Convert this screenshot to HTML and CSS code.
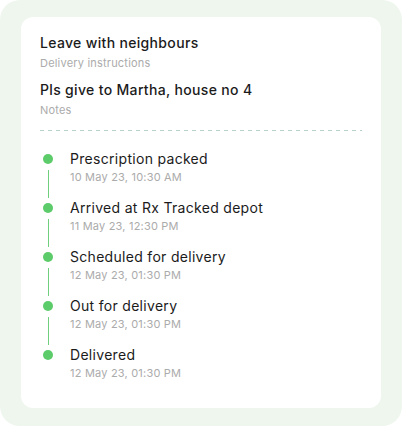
FILE: index.html
```html
<!DOCTYPE html>
<html lang="en">
<head>
<meta charset="utf-8">
<title>Delivery tracking</title>
<link rel="stylesheet" href="styles.css">
</head>
<body>
<div class="panel">
  <div class="card">
    <div class="field">
      <div class="field-title">Leave with neighbours</div>
      <div class="field-label">Delivery instructions</div>
    </div>
    <div class="field field-second">
      <div class="field-title">Pls give to Martha, house no 4</div>
      <div class="field-label">Notes</div>
    </div>
    <div class="divider"></div>
    <ul class="timeline">
      <li class="step">
        <div class="rail"><span class="dot"></span><span class="line"></span></div>
        <div class="step-text">
          <div class="step-title">Prescription packed</div>
          <div class="step-date">10 May 23, 10:30 AM</div>
        </div>
      </li>
      <li class="step">
        <div class="rail"><span class="dot"></span><span class="line"></span></div>
        <div class="step-text">
          <div class="step-title">Arrived at Rx Tracked depot</div>
          <div class="step-date">11 May 23, 12:30 PM</div>
        </div>
      </li>
      <li class="step">
        <div class="rail"><span class="dot"></span><span class="line"></span></div>
        <div class="step-text">
          <div class="step-title">Scheduled for delivery</div>
          <div class="step-date">12 May 23, 01:30 PM</div>
        </div>
      </li>
      <li class="step">
        <div class="rail"><span class="dot"></span><span class="line"></span></div>
        <div class="step-text">
          <div class="step-title">Out for delivery</div>
          <div class="step-date">12 May 23, 01:30 PM</div>
        </div>
      </li>
      <li class="step step-last">
        <div class="rail"><span class="dot"></span></div>
        <div class="step-text">
          <div class="step-title">Delivered</div>
          <div class="step-date">12 May 23, 01:30 PM</div>
        </div>
      </li>
    </ul>
  </div>
</div>
</body>
</html>
```
FILE: styles.css
```css
* { box-sizing: border-box; }
html, body {
  margin: 0;
  padding: 0;
  background: #ffffff;
}
body {
  font-family: "Inter", "Noto Sans", "Liberation Sans", sans-serif;
  color: #1b1b1b;
}
.panel {
  width: 402px;
  height: 426px;
  background: #eef6ee;
  border-radius: 20px;
  padding: 17px 21px 18px 21px;
}
.card {
  background: #ffffff;
  border-radius: 12px;
  height: 100%;
  padding: 16px 19px 12px 19px;
}
.field-title {
  font-size: 14px;
  line-height: 20px;
  font-weight: 500;
  letter-spacing: 0.33px;
  color: #1b1b1b;
}
.field-label {
  font-size: 11px;
  line-height: 16px;
  letter-spacing: 0.2px;
  color: #ababab;
  margin-top: 2px;
}
.field-second {
  margin-top: 9px;
}
.divider {
  margin-top: 12px;
  height: 1px;
  background-image: linear-gradient(to right, #b6d3c5 0 4px, transparent 4px 8px);
  background-size: 8px 1px;
  background-repeat: repeat-x;
}
.timeline {
  list-style: none;
  margin: 18px 0 0 0;
  padding: 0;
}
.step {
  display: flex;
  gap: 14px;
}
.rail {
  width: 16px;
  display: flex;
  flex-direction: column;
  align-items: center;
}
.dot {
  width: 10px;
  height: 10px;
  border-radius: 50%;
  background: #5ccb6a;
  margin-top: 5px;
  flex: none;
}
.line {
  width: 1px;
  flex: 1;
  background: #6fcf7c;
  margin-top: 6px;
}
.step-text {
  padding-bottom: 13px;
}
.step-title {
  font-size: 14px;
  line-height: 20px;
  font-weight: 400;
  letter-spacing: 0.3px;
  color: #1b1b1b;
}
.step-date {
  font-size: 11px;
  line-height: 16px;
  letter-spacing: 0.2px;
  color: #ababab;
}
```
